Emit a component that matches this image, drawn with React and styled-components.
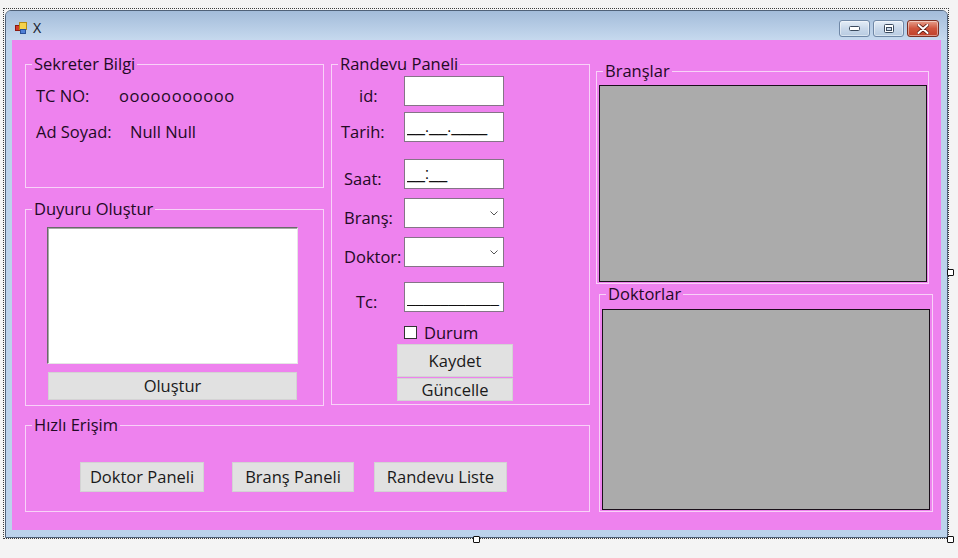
import React from 'react';
import styled, { createGlobalStyle } from 'styled-components';

const GlobalStyle = createGlobalStyle`
  html, body {
    margin: 0;
    padding: 0;
    background: #f4f4f4;
  }
  body {
    font-family: "Open Sans", "Liberation Sans", sans-serif;
    color: #230a25;
  }
  * {
    box-sizing: border-box;
  }
`;

const Stage = styled.div`
  width: 958px;
  height: 558px;
  padding: 8px 0 0 3px;
  overflow: hidden;
`;

const Selection = styled.div`
  position: relative;
  width: 946px;
  height: 531px;
  border: 1px dotted #3c3c3c;
  padding: 1px 0 0 1px;
`;

const Handle = styled.div`
  position: absolute;
  left: ${p => p.$x}px;
  top: ${p => p.$y}px;
  width: 7px;
  height: 7px;
  background: #fff;
  border: 1px solid #111;
  border-radius: 1px;
`;

const Window = styled.div`
  width: 943px;
  height: 528px;
  border: 1px solid #4f6178;
  border-radius: 6px 6px 0 0;
  background: #bcd3ec;
  display: flex;
  flex-direction: column;
  overflow: hidden;
`;

const TitleBar = styled.div`
  height: 29px;
  flex: none;
  display: flex;
  align-items: flex-start;
  padding: 0 8px 0 9px;
  background: linear-gradient(#a3bcda, #c6d9ee);
`;

const TitleText = styled.span`
  margin: 8px 0 0 6px;
  font-family: "Noto Sans", "Liberation Sans", sans-serif;
  font-size: 14px;
  line-height: 17px;
  color: #1c2430;
`;

const AppIcon = styled.svg`
  margin-top: 11px;
  flex: none;
`;

const Controls = styled.div`
  margin-left: auto;
  margin-top: 9px;
  display: flex;
  gap: 3px;
`;

const CtrlButton = styled.div`
  width: ${p => (p.$close ? 32 : 31)}px;
  height: 17px;
  border: 1px solid ${p => (p.$close ? '#7a2e22' : '#6f87a6')};
  border-radius: 3px;
  display: flex;
  align-items: center;
  justify-content: center;
  background: ${p =>
    p.$close
      ? 'linear-gradient(#e7a08c, #d0553d 50%, #c0402a)'
      : 'linear-gradient(#e4edf7, #c9d8ea 50%, #b8cbe1)'};
  box-shadow: inset 0 0 0 1px rgba(255, 255, 255, 0.45);
`;

const Body = styled.div`
  flex: 1;
  padding: 0 6px 7px 6px;
`;

const Client = styled.div`
  width: 929px;
  height: 490px;
  background: #ee82ee;
  display: flex;
  align-items: flex-start;
  padding: 14px 0 0 13px;
`;

const Column = styled.div`
  display: flex;
  flex-direction: column;
  margin-left: ${p => p.$ml || 0}px;
  margin-top: ${p => p.$mt || 0}px;
`;

const Row = styled.div`
  display: flex;
  align-items: flex-start;
`;

const Group = styled.fieldset`
  margin: ${p => p.$mt || 0}px 0 0 ${p => p.$ml || 0}px;
  padding: 0;
  width: ${p => p.$w}px;
  height: ${p => p.$h}px;
  min-inline-size: 0;
  border: 1px solid #f8d2f8;
  display: flex;
  flex-direction: column;
  align-items: flex-start;
`;

const Legend = styled.legend`
  margin-left: 6px;
  padding: 0 2px;
  font-size: 16.5px;
  line-height: 20px;
  color: #230a25;
`;

const InfoRow = styled.div`
  display: flex;
  margin-top: ${p => p.$mt}px;
  padding-left: 10px;
  font-size: 16.5px;
  line-height: 20px;
`;

const InfoLabel = styled.span`
  width: ${p => p.$w}px;
`;

const InfoValue = styled.span`
  letter-spacing: ${p => p.$ls || 0}px;
`;

const NoteArea = styled.textarea`
  margin: 8px 0 0 21px;
  width: 251px;
  height: 137px;
  resize: none;
  background: #fff;
  border: 1px solid;
  border-color: #696969 #e6e6e6 #e6e6e6 #696969;
  box-shadow: inset 1px 1px 0 #a9a9a9;
  outline: none;
`;

const Button = styled.button`
  margin: ${p => p.$mt || 0}px 0 0 ${p => p.$ml || 0}px;
  width: ${p => p.$w}px;
  height: ${p => p.$h}px;
  padding: 0;
  background: #e1e1e1;
  border: 1px solid #d3d3d3;
  font-family: "Open Sans", "Liberation Sans", sans-serif;
  font-size: 16.5px;
  line-height: 20px;
  color: #1a1a1a;
  flex: none;
`;

const FormRow = styled.div`
  display: flex;
  align-items: flex-start;
  margin-top: ${p => p.$mt}px;
`;

const FieldLabel = styled.span`
  width: 72px;
  padding-left: ${p => p.$indent}px;
  margin-top: 10px;
  font-size: 16.5px;
  line-height: 20px;
  white-space: nowrap;
`;

const TextBox = styled.input`
  width: 100px;
  height: 30px;
  padding: 0 2px;
  background: #fff;
  border: 1px solid #857487;
  outline: none;
  font-family: "Liberation Sans", Arial, sans-serif;
  font-size: ${p => p.$fs || 16}px;
  color: #111;
`;

const Combo = styled.div`
  width: 100px;
  height: 30px;
  background: #fff;
  border: 1px solid #857487;
  display: flex;
  align-items: center;
  justify-content: flex-end;
  padding-right: 5px;
`;

const CheckRow = styled.div`
  display: flex;
  align-items: center;
  height: 13px;
  margin-top: 14px;
  padding-left: 72px;
  font-size: 16.5px;
  line-height: 20px;
`;

const CheckBox = styled.span`
  width: 13px;
  height: 13px;
  background: #fff;
  border: 1px solid #333;
  margin-right: 7px;
`;

const ButtonRow = styled.div`
  display: flex;
  margin-top: 27px;
  padding-left: 54px;
`;

const GridBox = styled.div`
  margin: ${p => p.$mt}px 0 0 2px;
  width: 328px;
  height: ${p => p.$h}px;
  background: #ababab;
  border: 1px solid #1a0f1a;
`;

const Chevron = () => (
  <svg width="8" height="5" viewBox="0 0 8 5">
    <polyline points="0.5,0.5 4,4 7.5,0.5" fill="none" stroke="#555" strokeWidth="1" />
  </svg>
);

const App = () => (
  <>
    <GlobalStyle />
    <Stage>
      <Selection>
        <Window>
          <TitleBar>
            <AppIcon width="12" height="12" viewBox="0 0 12 12">
              <rect x="0.5" y="3.5" width="4" height="5" fill="#d23a2a" stroke="#8a1a10" strokeWidth="1" />
              <rect x="4.5" y="0.5" width="7" height="7" fill="#f6d24a" stroke="#b58a12" strokeWidth="1" />
              <rect x="5.5" y="7.5" width="5" height="4" fill="#4f7fd6" stroke="#2a4f99" strokeWidth="1" />
            </AppIcon>
            <TitleText>X</TitleText>
            <Controls>
              <CtrlButton>
                <svg width="11" height="5" viewBox="0 0 11 5">
                  <rect x="0.5" y="0.5" width="10" height="4" fill="#fff" stroke="#3b4a5e" strokeWidth="1" rx="1" />
                </svg>
              </CtrlButton>
              <CtrlButton>
                <svg width="10" height="9" viewBox="0 0 10 9">
                  <rect x="0.5" y="0.5" width="9" height="8" fill="#fff" stroke="#3b4a5e" strokeWidth="1" rx="1" />
                  <rect x="2.5" y="3.5" width="5" height="3" fill="#c9d8ea" stroke="#3b4a5e" strokeWidth="1" />
                </svg>
              </CtrlButton>
              <CtrlButton $close>
                <svg width="12" height="10" viewBox="0 0 12 10">
                  <path d="M1.5 1 L10.5 9 M10.5 1 L1.5 9" stroke="#5a1a12" strokeWidth="3.6" strokeLinecap="round" />
                  <path d="M1.5 1 L10.5 9 M10.5 1 L1.5 9" stroke="#fff" strokeWidth="2" strokeLinecap="round" />
                </svg>
              </CtrlButton>
            </Controls>
          </TitleBar>
          <Body>
            <Client>
              <Column>
                <Row>
                  <Column>
                    <Group $w={299} $h={134}>
                      <Legend>Sekreter Bilgi</Legend>
                      <InfoRow $mt={12}>
                        <InfoLabel $w={83}>TC NO:</InfoLabel>
                        <InfoValue $ls={0.6}>ooooooooooo</InfoValue>
                      </InfoRow>
                      <InfoRow $mt={16}>
                        <InfoLabel $w={94}>Ad Soyad:</InfoLabel>
                        <InfoValue>Null Null</InfoValue>
                      </InfoRow>
                    </Group>
                    <Group $w={299} $h={207} $mt={11}>
                      <Legend>Duyuru Oluştur</Legend>
                      <NoteArea />
                      <Button $w={249} $h={28} $mt={8} $ml={22}>Oluştur</Button>
                    </Group>
                  </Column>
                  <Group $w={259} $h={351} $ml={7}>
                    <Legend>Randevu Paneli</Legend>
                    <FormRow $mt={2}>
                      <FieldLabel $indent={27}>id:</FieldLabel>
                      <TextBox readOnly defaultValue="" />
                    </FormRow>
                    <FormRow $mt={6}>
                      <FieldLabel $indent={9}>Tarih:</FieldLabel>
                      <TextBox readOnly defaultValue="__.__.____" />
                    </FormRow>
                    <FormRow $mt={17}>
                      <FieldLabel $indent={12}>Saat:</FieldLabel>
                      <TextBox readOnly defaultValue="__:__" />
                    </FormRow>
                    <FormRow $mt={9}>
                      <FieldLabel $indent={12}>Branş:</FieldLabel>
                      <Combo><Chevron /></Combo>
                    </FormRow>
                    <FormRow $mt={9}>
                      <FieldLabel $indent={12}>Doktor:</FieldLabel>
                      <Combo><Chevron /></Combo>
                    </FormRow>
                    <FormRow $mt={15}>
                      <FieldLabel $indent={24}>Tc:</FieldLabel>
                      <TextBox readOnly defaultValue="___________" $fs={15} />
                    </FormRow>
                    <CheckRow>
                      <CheckBox />
                      Durum
                    </CheckRow>
                    <Button $w={116} $h={33} $mt={5} $ml={65}>Kaydet</Button>
                    <Button $w={116} $h={23} $mt={1} $ml={65}>Güncelle</Button>
                  </Group>
                </Row>
                <Group $w={565} $h={97} $mt={9}>
                  <Legend>Hızlı Erişim</Legend>
                  <ButtonRow>
                    <Button $w={124} $h={30}>Doktor Paneli</Button>
                    <Button $w={122} $h={30} $ml={28}>Branş Paneli</Button>
                    <Button $w={133} $h={30} $ml={20}>Randevu Liste</Button>
                  </ButtonRow>
                </Group>
              </Column>
              <Column $ml={6} $mt={7}>
                <Group $w={333} $h={223}>
                  <Legend>Branşlar</Legend>
                  <GridBox $mt={4} $h={197} />
                </Group>
                <Group $w={334} $h={228} $ml={3}>
                  <Legend>Doktorlar</Legend>
                  <GridBox $mt={5} $h={201} />
                </Group>
              </Column>
            </Client>
          </Body>
        </Window>
        <Handle $x={943} $y={260} />
        <Handle $x={469} $y={527} />
        <Handle $x={943} $y={527} />
      </Selection>
    </Stage>
  </>
);

export default App;
